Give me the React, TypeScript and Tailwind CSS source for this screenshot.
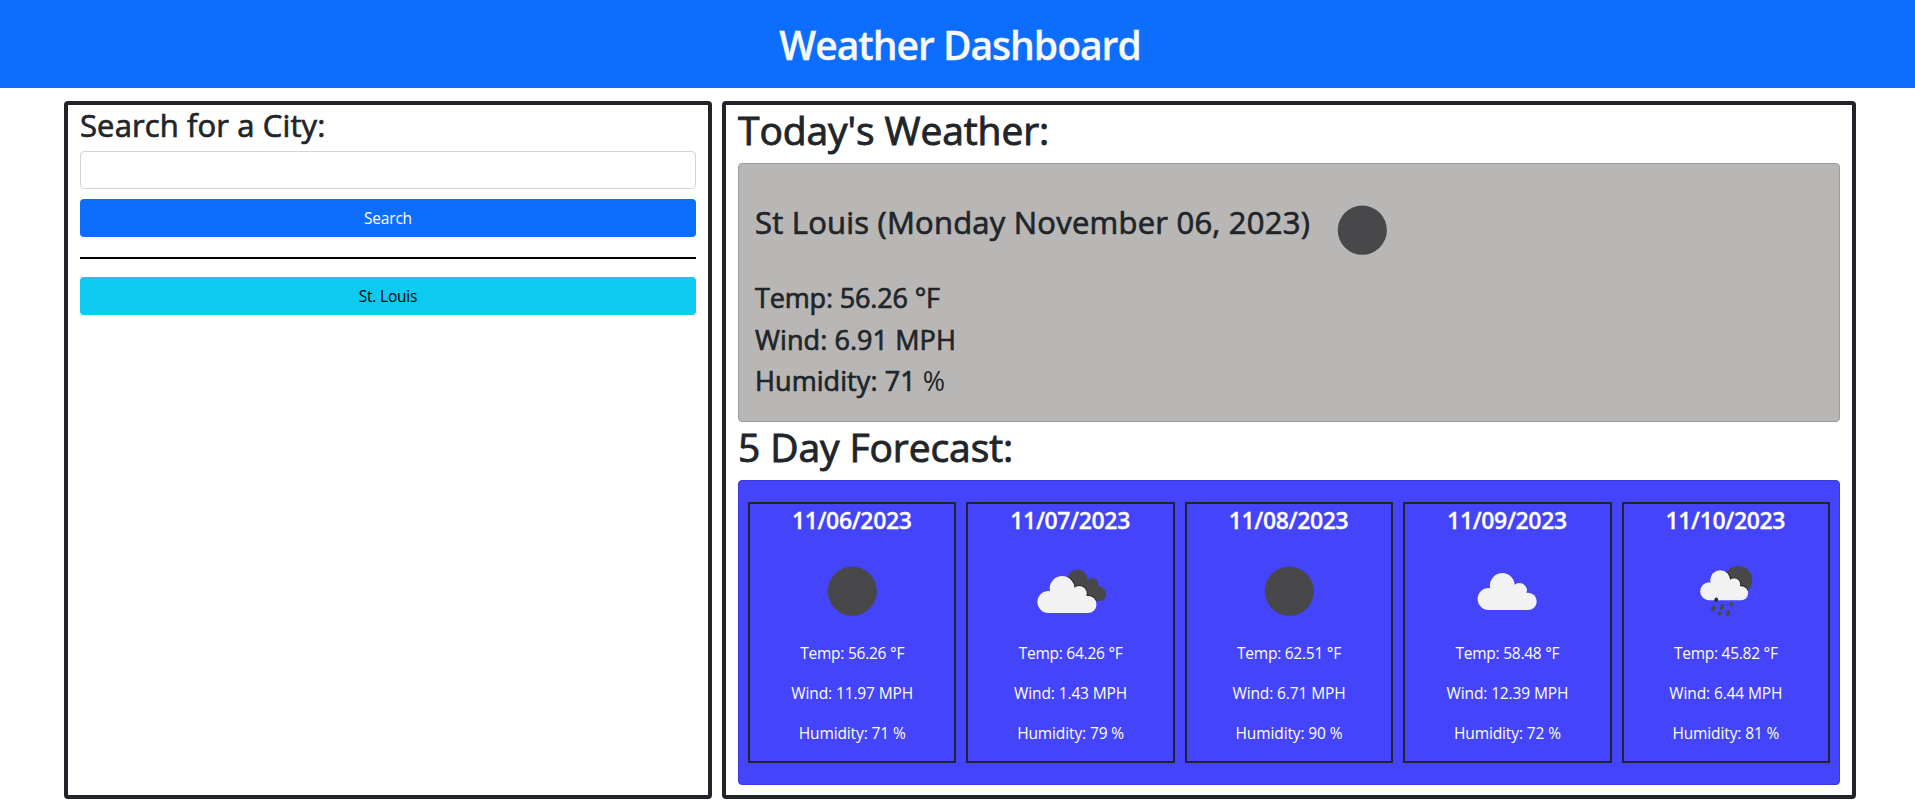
import React from "react";

type Icon = "clear" | "broken" | "cloud" | "rain";

const days: { date: string; icon: Icon; temp: string; wind: string; humidity: string }[] = [
  { date: "11/06/2023", icon: "clear", temp: "56.26", wind: "11.97", humidity: "71" },
  { date: "11/07/2023", icon: "broken", temp: "64.26", wind: "1.43", humidity: "79" },
  { date: "11/08/2023", icon: "clear", temp: "62.51", wind: "6.71", humidity: "90" },
  { date: "11/09/2023", icon: "cloud", temp: "58.48", wind: "12.39", humidity: "72" },
  { date: "11/10/2023", icon: "rain", temp: "45.82", wind: "6.44", humidity: "81" },
];

function Cloud() {
  return (
    <>
      <circle cx="11" cy="26" r="11" />
      <circle cx="24.7" cy="12.4" r="12.4" />
      <circle cx="41.8" cy="17.6" r="7.6" />
      <circle cx="50.5" cy="28.4" r="8.6" />
      <path d="M11 16H46V20H50.5V37H11z" />
    </>
  );
}

function WeatherIcon({ kind }: { kind: Icon }) {
  return (
    <svg width="100" height="100" viewBox="0 0 100 100" className="block">
      {kind === "clear" && <circle cx="50.3" cy="50.2" r="24.6" fill="#48484a" />}
      {kind === "cloud" && (
        <g transform="translate(20.6 32)" fill="#f2f2f2">
          <Cloud />
        </g>
      )}
      {kind === "broken" && (
        <>
          <clipPath id="back-cloud">
            <circle cx="56.4" cy="38.8" r="10.2" />
            <circle cx="71.4" cy="43.2" r="6.1" />
            <circle cx="78.2" cy="52.8" r="7.3" />
            <path d="M54 40h20l4 8v12H60z" />
          </clipPath>
          <g clipPath="url(#back-cloud)">
            <path d="M40 20H90V70H40z" fill="#48484a" />
            <g transform="translate(16.4 35)" fill="#262628" stroke="#262628" strokeWidth="2">
              <Cloud />
            </g>
          </g>
          <g transform="translate(16.4 35)" fill="#f2f2f2">
            <Cloud />
          </g>
        </>
      )}
      {kind === "rain" && (
        <>
          <clipPath id="back-sun">
            <circle cx="62.2" cy="39.2" r="14.1" />
          </clipPath>
          <g clipPath="url(#back-sun)">
            <path d="M40 20H90V70H40z" fill="#48484a" />
            <g transform="translate(24.2 29.2) scale(.81)" fill="#262628" stroke="#262628" strokeWidth="2.2">
              <Cloud />
            </g>
          </g>
          <g transform="translate(24.2 29.2) scale(.81)" fill="#f2f2f2">
            <Cloud />
          </g>
          <g stroke="#48484a" strokeWidth="3.6" strokeLinecap="round">
            <path d="M40.4 58.4l-.3.8" stroke="#2c2c2e" />
            <path d="M37.8 66.2l-.9 2.3M46.4 64.9l-.9 2.3M55.4 63l-.3.7M43.6 72l-.3.7M52.4 71.2l-.9 2.3" />
          </g>
        </>
      )}
    </svg>
  );
}

export default function App() {
  return (
    <div className="h-[804px] overflow-hidden bg-white font-['Open_Sans','Noto_Sans',sans-serif] text-[#212529]">
      <header className="flex h-[88px] justify-center bg-[#0d6efd] pt-[21px] pl-[5px]">
        <h1 className="text-[39px] leading-[48px] font-semibold tracking-[-1px] text-[#f8f9fa] [-webkit-text-stroke:0.3px_#f8f9fa]">
          Weather Dashboard
        </h1>
      </header>

      <main className="mt-[13px] mr-[59px] ml-16 flex h-[698px] gap-2.5">
        <aside className="w-[648px] rounded-[4px] border-4 border-[#212529] px-3">
          <h2 className="mt-px text-[31px] leading-[38px] font-normal tracking-[0.12px] [-webkit-text-stroke:0.7px_#212529]">
            Search for a City:
          </h2>
          <input className="mt-[7px] block h-[38px] w-full rounded-[4px] border border-[#ced4da] px-3" />
          <button className="mt-2.5 block h-[38px] w-full rounded-[4px] bg-[#0d6efd] text-[15.5px] leading-6 tracking-[-0.2px] text-white">
            Search
          </button>
          <hr className="mt-5 h-0.5 border-0 bg-black" />
          <button className="mt-[18px] block h-[38px] w-full rounded-[4px] bg-[#0dcaf0] text-[15.5px] leading-6 tracking-[-0.2px] text-black">
            St. Louis
          </button>
        </aside>

        <section className="flex-1 rounded-[4px] border-4 border-[#212529] px-3">
          <h2 className="mt-px text-[39px] leading-[48px] font-normal tracking-[-0.1px] [-webkit-text-stroke:0.9px_#212529]">
            Today's Weather:
          </h2>
          <div className="mt-[9px] h-[259px] rounded-[4px] border border-[#9c9b9a] bg-[#b8b7b6] pt-4 pl-4">
            <div className="flex h-[97px]">
              <h3 className="mt-[23px] text-[31px] leading-[38px] font-normal tracking-[0.22px] [-webkit-text-stroke:0.7px_#212529]">
                St Louis (Monday November 06, 2023)
              </h3>
              <div className="ml-0.5">
                <WeatherIcon kind="clear" />
              </div>
            </div>
            <div className="text-[27px] leading-[41.5px] tracking-[0.08px] [-webkit-text-stroke:0.7px_#212529]">
              <p className="tracking-[-0.15px]">Temp: 56.26 °F</p>
              <p>Wind: 6.91 MPH</p>
              <p>
                Humidity: 71 <span className="[-webkit-text-stroke:0]">%</span>
              </p>
            </div>
          </div>
          <h2 className="mt-px text-[39px] leading-[48px] font-normal tracking-[-0.1px] [-webkit-text-stroke:0.9px_#212529]">
            5 Day Forecast:
          </h2>
          <div className="mt-[9px] flex h-[305px] gap-2.5 rounded-[4px] border border-[#3b3bdf] bg-[#4444fb] px-[9px] py-[21px] text-white">
            {days.map((d) => (
              <article key={d.date} className="flex h-[261px] flex-1 flex-col items-center border-2 border-[#212529]">
                <h4 className="mt-0.5 pr-px text-[23px] leading-7 font-semibold tracking-[-0.35px] [-webkit-text-stroke:0.3px_#fff]">
                  {d.date}
                </h4>
                <div className="mt-[7px]">
                  <WeatherIcon kind={d.icon} />
                </div>
                <div className="space-y-4 text-[15.5px] leading-6 tracking-[-0.12px]">
                  <p className="text-center tracking-[-0.25px]">Temp: {d.temp} °F</p>
                  <p className="text-center">Wind: {d.wind} MPH</p>
                  <p className="text-center">Humidity: {d.humidity} %</p>
                </div>
              </article>
            ))}
          </div>
        </section>
      </main>
    </div>
  );
}
